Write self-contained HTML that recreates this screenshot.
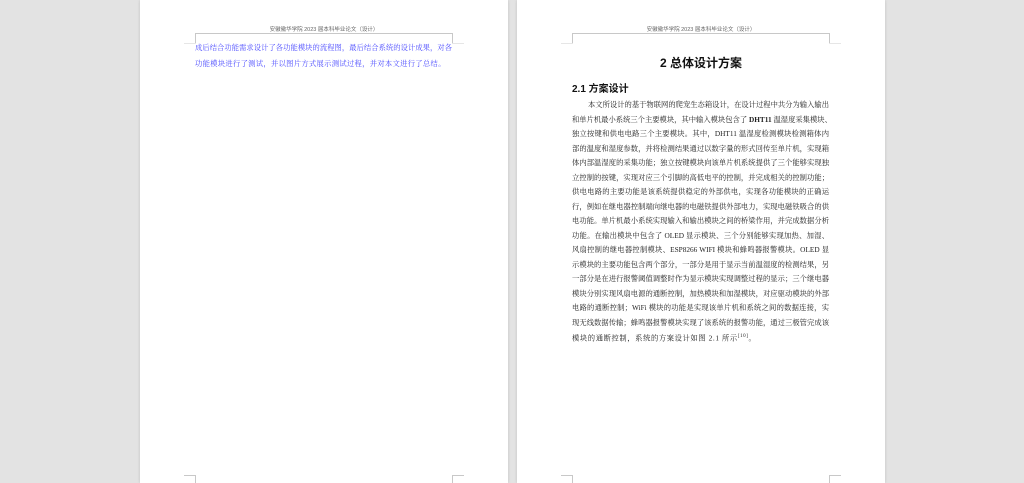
<!DOCTYPE html>
<html><head><meta charset="utf-8"><style>
html,body{margin:0;padding:0;}
body{width:1024px;height:483px;background:#e3e3e3;position:relative;overflow:hidden;font-family:"Liberation Serif","Noto Serif CJK SC",serif;}
.page{position:absolute;top:0;width:368px;height:483px;background:#fff;box-shadow:0 0 3px rgba(0,0,0,.15);}
.hdr{position:absolute;top:25px;left:0;width:368px;text-align:center;font-size:5.5px;color:#666;font-family:"Liberation Sans","Noto Sans CJK SC",sans-serif;}
.l{position:absolute;background:#c8c8c8;}
.ln{position:absolute;left:55px;width:257px;white-space:nowrap;text-align:justify;text-align-last:justify;}
.b .ln{font-size:7.3px;color:#222;height:12px;line-height:12px;}
</style></head><body>
<div class="page" style="left:140px">
 <div class="hdr">安徽徽华学院 2023 届本科毕业论文（设计）</div>
 <div class="l" style="left:55px;top:33px;width:258px;height:1px"></div>
 <div class="l" style="left:55px;top:33px;width:1px;height:10px"></div>
 <div class="l" style="left:312px;top:33px;width:1px;height:10px"></div>
 <div class="l" style="left:44px;top:43px;width:12px;height:1px;background:#e6e6e6"></div>
 <div class="l" style="left:312px;top:43px;width:12px;height:1px;background:#e6e6e6"></div>
 <div class="ln" style="top:42px;font-size:7.3px;color:#4b4bff;line-height:12px">成后结合功能需求设计了各功能模块的流程图，最后结合系统的设计成果，对各</div>
 <div class="ln" style="top:58px;font-size:7.3px;color:#4b4bff;line-height:12px;text-align-last:left;letter-spacing:0.3px">功能模块进行了测试，并以图片方式展示测试过程，并对本文进行了总结。</div>
 <div class="l" style="left:55px;top:475px;width:1px;height:8px"></div>
 <div class="l" style="left:44px;top:475px;width:11px;height:1px"></div>
 <div class="l" style="left:312px;top:475px;width:1px;height:8px"></div>
 <div class="l" style="left:313px;top:475px;width:11px;height:1px"></div>
</div>
<div class="page b" style="left:517px">
 <div class="hdr">安徽徽华学院 2023 届本科毕业论文（设计）</div>
 <div class="l" style="left:55px;top:33px;width:258px;height:1px"></div>
 <div class="l" style="left:55px;top:33px;width:1px;height:10px"></div>
 <div class="l" style="left:312px;top:33px;width:1px;height:10px"></div>
 <div class="l" style="left:44px;top:43px;width:12px;height:1px;background:#e6e6e6"></div>
 <div class="l" style="left:312px;top:43px;width:12px;height:1px;background:#e6e6e6"></div>
 <div style="position:absolute;top:54px;left:0;width:368px;text-align:center;font-size:12px;font-weight:bold;font-family:'Liberation Sans','Noto Sans CJK SC',sans-serif;color:#111">2 总体设计方案</div>
 <div style="position:absolute;top:80px;left:55px;font-size:10px;font-weight:bold;font-family:'Liberation Sans','Noto Sans CJK SC',sans-serif;color:#111">2.1 方案设计</div>
 <div class="ln" style="top:99px;left:71px;width:241px">本文所设计的基于物联网的爬宠生态箱设计，在设计过程中共分为输入输出</div>
 <div class="ln" style="top:113.5px">和单片机最小系统三个主要模块，其中输入模块包含了 <b>DHT11</b> 温湿度采集模块、</div>
 <div class="ln" style="top:128px">独立按键和供电电路三个主要模块。其中，DHT11 温湿度检测模块检测箱体内</div>
 <div class="ln" style="top:142.5px">部的温度和湿度参数，并将检测结果通过以数字量的形式回传至单片机，实现箱</div>
 <div class="ln" style="top:157px">体内部温湿度的采集功能；独立按键模块向该单片机系统提供了三个能够实现独</div>
 <div class="ln" style="top:171.5px">立控制的按键，实现对应三个引脚的高低电平的控制，并完成相关的控制功能；</div>
 <div class="ln" style="top:186px">供电电路的主要功能是该系统提供稳定的外部供电，实现各功能模块的正确运</div>
 <div class="ln" style="top:200.5px">行，例如在继电器控制端向继电器的电磁铁提供外部电力，实现电磁铁吸合的供</div>
 <div class="ln" style="top:215px">电功能。单片机最小系统实现输入和输出模块之间的桥梁作用，并完成数据分析</div>
 <div class="ln" style="top:229.5px">功能。在输出模块中包含了 OLED 显示模块、三个分别能够实现加热、加湿、</div>
 <div class="ln" style="top:244px">风扇控制的继电器控制模块、ESP8266 WIFI 模块和蜂鸣器报警模块。OLED 显</div>
 <div class="ln" style="top:258.5px">示模块的主要功能包含两个部分，一部分是用于显示当前温湿度的检测结果，另</div>
 <div class="ln" style="top:273px">一部分是在进行报警阈值调整时作为显示模块实现调整过程的显示；三个继电器</div>
 <div class="ln" style="top:287.5px">模块分别实现风扇电源的通断控制，加热模块和加湿模块，对应驱动模块的外部</div>
 <div class="ln" style="top:302px">电路的通断控制；WiFi 模块的功能是实现该单片机和系统之间的数据连接，实</div>
 <div class="ln" style="top:316.5px">现无线数据传输；蜂鸣器报警模块实现了该系统的报警功能，通过三极管完成该</div>
 <div class="ln" style="top:331px;text-align-last:left;letter-spacing:0.6px">模块的通断控制，系统的方案设计如图 2.1 所示<sup style="font-size:5px">[10]</sup>。</div>
 <div class="l" style="left:55px;top:475px;width:1px;height:8px"></div>
 <div class="l" style="left:44px;top:475px;width:11px;height:1px"></div>
 <div class="l" style="left:312px;top:475px;width:1px;height:8px"></div>
 <div class="l" style="left:313px;top:475px;width:11px;height:1px"></div>
</div>
</body></html>
